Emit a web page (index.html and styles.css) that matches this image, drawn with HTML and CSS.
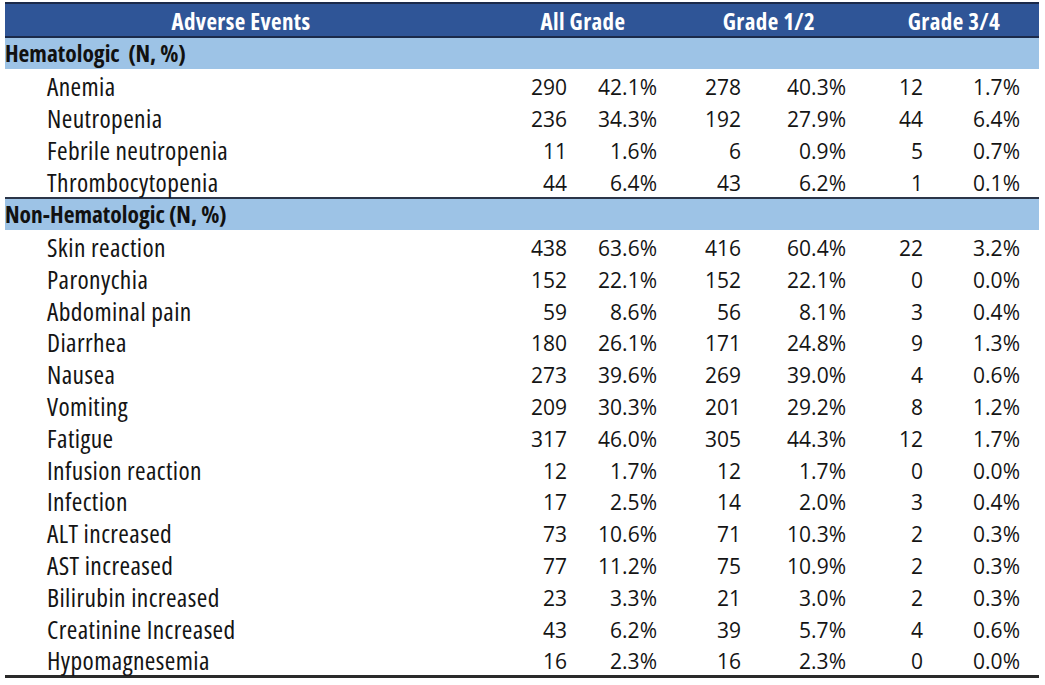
FILE: index.html
```html
<!DOCTYPE html>
<html>
<head>
<meta charset="utf-8">
<link rel="stylesheet" href="styles.css">
</head>
<body>
<div class="table">
  <div class="head">
    <div class="h h-ae">Adverse Events</div>
    <div class="h h-all">All Grade</div>
    <div class="h h-12">Grade 1/2</div>
    <div class="h h-34">Grade 3/4</div>
  </div>
  <div class="band">Hematologic&nbsp; (N, %)</div>
  <div class="group">
    <div class="row"><span class="lbl">Anemia</span><span>290</span><span>42.1%</span><span>278</span><span>40.3%</span><span>12</span><span>1.7%</span></div>
    <div class="row"><span class="lbl">Neutropenia</span><span>236</span><span>34.3%</span><span>192</span><span>27.9%</span><span>44</span><span>6.4%</span></div>
    <div class="row"><span class="lbl">Febrile neutropenia</span><span>11</span><span>1.6%</span><span>6</span><span>0.9%</span><span>5</span><span>0.7%</span></div>
    <div class="row"><span class="lbl">Thrombocytopenia</span><span>44</span><span>6.4%</span><span>43</span><span>6.2%</span><span>1</span><span>0.1%</span></div>
  </div>
  <div class="band band-sep">Non-Hematologic (N, %)</div>
  <div class="group group-last">
    <div class="row"><span class="lbl">Skin reaction</span><span>438</span><span>63.6%</span><span>416</span><span>60.4%</span><span>22</span><span>3.2%</span></div>
    <div class="row"><span class="lbl">Paronychia</span><span>152</span><span>22.1%</span><span>152</span><span>22.1%</span><span>0</span><span>0.0%</span></div>
    <div class="row"><span class="lbl">Abdominal pain</span><span>59</span><span>8.6%</span><span>56</span><span>8.1%</span><span>3</span><span>0.4%</span></div>
    <div class="row"><span class="lbl">Diarrhea</span><span>180</span><span>26.1%</span><span>171</span><span>24.8%</span><span>9</span><span>1.3%</span></div>
    <div class="row"><span class="lbl">Nausea</span><span>273</span><span>39.6%</span><span>269</span><span>39.0%</span><span>4</span><span>0.6%</span></div>
    <div class="row"><span class="lbl">Vomiting</span><span>209</span><span>30.3%</span><span>201</span><span>29.2%</span><span>8</span><span>1.2%</span></div>
    <div class="row"><span class="lbl">Fatigue</span><span>317</span><span>46.0%</span><span>305</span><span>44.3%</span><span>12</span><span>1.7%</span></div>
    <div class="row"><span class="lbl">Infusion reaction</span><span>12</span><span>1.7%</span><span>12</span><span>1.7%</span><span>0</span><span>0.0%</span></div>
    <div class="row"><span class="lbl">Infection</span><span>17</span><span>2.5%</span><span>14</span><span>2.0%</span><span>3</span><span>0.4%</span></div>
    <div class="row"><span class="lbl">ALT increased</span><span>73</span><span>10.6%</span><span>71</span><span>10.3%</span><span>2</span><span>0.3%</span></div>
    <div class="row"><span class="lbl">AST increased</span><span>77</span><span>11.2%</span><span>75</span><span>10.9%</span><span>2</span><span>0.3%</span></div>
    <div class="row"><span class="lbl">Bilirubin increased</span><span>23</span><span>3.3%</span><span>21</span><span>3.0%</span><span>2</span><span>0.3%</span></div>
    <div class="row"><span class="lbl">Creatinine Increased</span><span>43</span><span>6.2%</span><span>39</span><span>5.7%</span><span>4</span><span>0.6%</span></div>
    <div class="row"><span class="lbl">Hypomagnesemia</span><span>16</span><span>2.3%</span><span>16</span><span>2.3%</span><span>0</span><span>0.0%</span></div>
  </div>
</div>
</body>
</html>
```
FILE: styles.css
```css
html, body {
  margin: 0;
  padding: 0;
  background: #ffffff;
}
body {
  padding: 2px 0 0 5px;
  color: #141414;
  font-family: "Open Sans", "Liberation Sans", sans-serif;
  font-stretch: 75%;
}
.table {
  width: 1034px;
}
.head {
  display: grid;
  grid-template-columns: 484px 188px 184px 178px;
  height: 32px;
  background: #2f5597;
  border-top: 2px solid #1b2a4a;
  border-bottom: 2px solid #1b2a4a;
}
.h {
  color: #ffffff;
  font-weight: bold;
  font-size: 23px;
  letter-spacing: 0.4px;
  font-stretch: 75%;
  text-align: center;
  line-height: 30px;
  padding-top: 2px;
}
.h-ae { padding-right: 12px; }
.h-34 { padding-left: 8px; }
.band {
  height: 31px;
  line-height: 31px;
  background: #9dc3e6;
  padding-left: 0;
  font-weight: bold;
  font-size: 23.5px;
  font-stretch: 75%;
  color: #111;
}
.band-sep {
  border-top: 2px solid #2b3548;
}
.group-last {
  border-bottom: 3px solid #2a2a2a;
}
.row {
  display: grid;
  grid-template-columns: 490px 72px 90px 84px 105px 77px 97px 19px;
  height: 32px;
  align-items: center;
  font-size: 21px;
  font-stretch: 100%;
}
.group-last .row {
  height: 31.8px;
}
.row span {
  text-align: right;
}
.row .lbl {
  text-align: left;
  padding-left: 42px;
  padding-bottom: 2px;
  font-size: 25.5px;
  letter-spacing: 0.4px;
  font-stretch: 75%;
}
```
